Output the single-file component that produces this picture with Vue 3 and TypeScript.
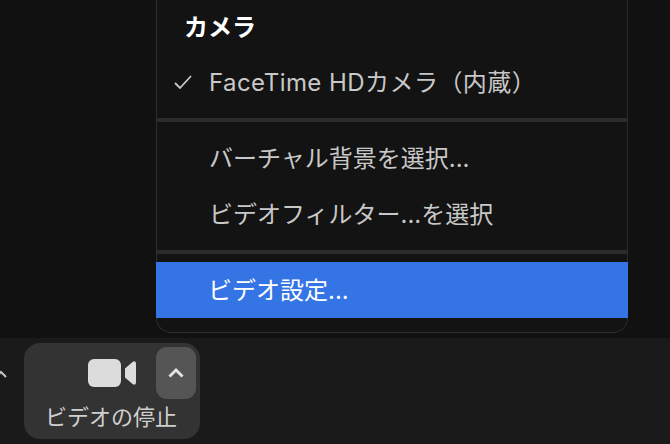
<script setup lang="ts">
const firstGroup: string[] = ['バーチャル背景を選択...', 'ビデオフィルター...を選択']
</script>

<template>
  <div class="page">
    <div class="stage">
      <div class="menu">
        <div class="row heading">カメラ</div>
        <div class="row item checked">
          <svg class="check" width="20" height="16" viewBox="0 0 20 16">
            <path d="M2 9 L7 14 L18 2" fill="none" stroke="#c8c8c8" stroke-width="1.8" />
          </svg>
          <span class="device">FaceTime HDカメラ（内蔵）</span>
        </div>
        <div class="divider"></div>
        <div v-for="t in firstGroup" :key="t" class="row item">{{ t }}</div>
        <div class="divider"></div>
        <div class="row item active">ビデオ設定...</div>
      </div>
    </div>
    <div class="toolbar">
      <svg class="edge" width="8" height="12" viewBox="0 0 8 12">
        <path d="M-4 8 L1 3 L6 8" fill="none" stroke="#c4c4c4" stroke-width="2" />
      </svg>
      <div class="video-btn">
        <svg class="cam" width="48" height="28" viewBox="0 0 48 28">
          <rect x="0" y="0" width="33" height="28" rx="6" fill="#dcdcdc" />
          <path d="M37 9.5 L44.5 3 Q48 1 48 5 L48 23 Q48 27 44.5 25 L37 18.5 Z" fill="#dcdcdc" />
        </svg>
        <div class="arrow">
          <svg width="18" height="12" viewBox="0 0 18 12">
            <path d="M2.5 9.5 L9 3 L15.5 9.5" fill="none" stroke="#e4e4e4" stroke-width="3" />
          </svg>
        </div>
        <div class="label">ビデオの停止</div>
      </div>
    </div>
  </div>
</template>

<style>
html, body { margin: 0; background: #111; }
</style>

<style scoped>
.page {
  width: 670px;
  height: 444px;
  overflow: hidden;
  display: flex;
  flex-direction: column;
  background: #111111;
  font-family: "Inter", "Noto Sans CJK JP", sans-serif;
}
.stage {
  height: 338px;
  padding-left: 156px;
  box-sizing: border-box;
}
.menu {
  width: 472px;
  height: 333px;
  box-sizing: border-box;
  background: #131313;
  border: 1px solid #2e2e2e;
  border-top: 0;
  border-right-color: #2a2a2a;
  border-radius: 0 0 15px 15px;
}
.row {
  height: 56px;
  box-sizing: border-box;
  display: flex;
  align-items: center;
  font-size: 24px;
  color: #c8c8c8;
  padding: 0 0 3px 52px;
  white-space: nowrap;
}
.heading {
  height: 54px;
  padding-left: 27px;
  color: #fff;
  font-weight: 700;
}
.device { letter-spacing: 0.45px; }
.checked { position: relative; }
.check { position: absolute; left: 16px; top: 20px; }
.divider {
  height: 4px;
  margin: 8px 0;
  background: #2c2c2c;
}
.active {
  margin: 0 -1px;
  background: #3574e5;
  color: #fff;
}
.toolbar {
  flex: 1;
  background: #1a1a1a;
  position: relative;
  padding: 5px 0 0 24px;
}
.edge { position: absolute; left: 0; top: 31px; }
.video-btn {
  width: 176px;
  height: 96px;
  box-sizing: border-box;
  background: #333333;
  border-radius: 16px;
  display: grid;
  grid-template-columns: 1fr 40px;
  grid-template-rows: 52px 1fr;
  padding: 4px 4px 0 0;
}
.cam {
  justify-self: end;
  margin: 12px 20px 0 0;
}
.arrow {
  background: #555555;
  border-radius: 11px;
  display: flex;
  align-items: center;
  justify-content: center;
}
.label {
  grid-column: 1 / 3;
  text-align: center;
  font-size: 22px;
  line-height: 36px;
  color: #cfcfcf;
  padding-left: 2px;
}
</style>
